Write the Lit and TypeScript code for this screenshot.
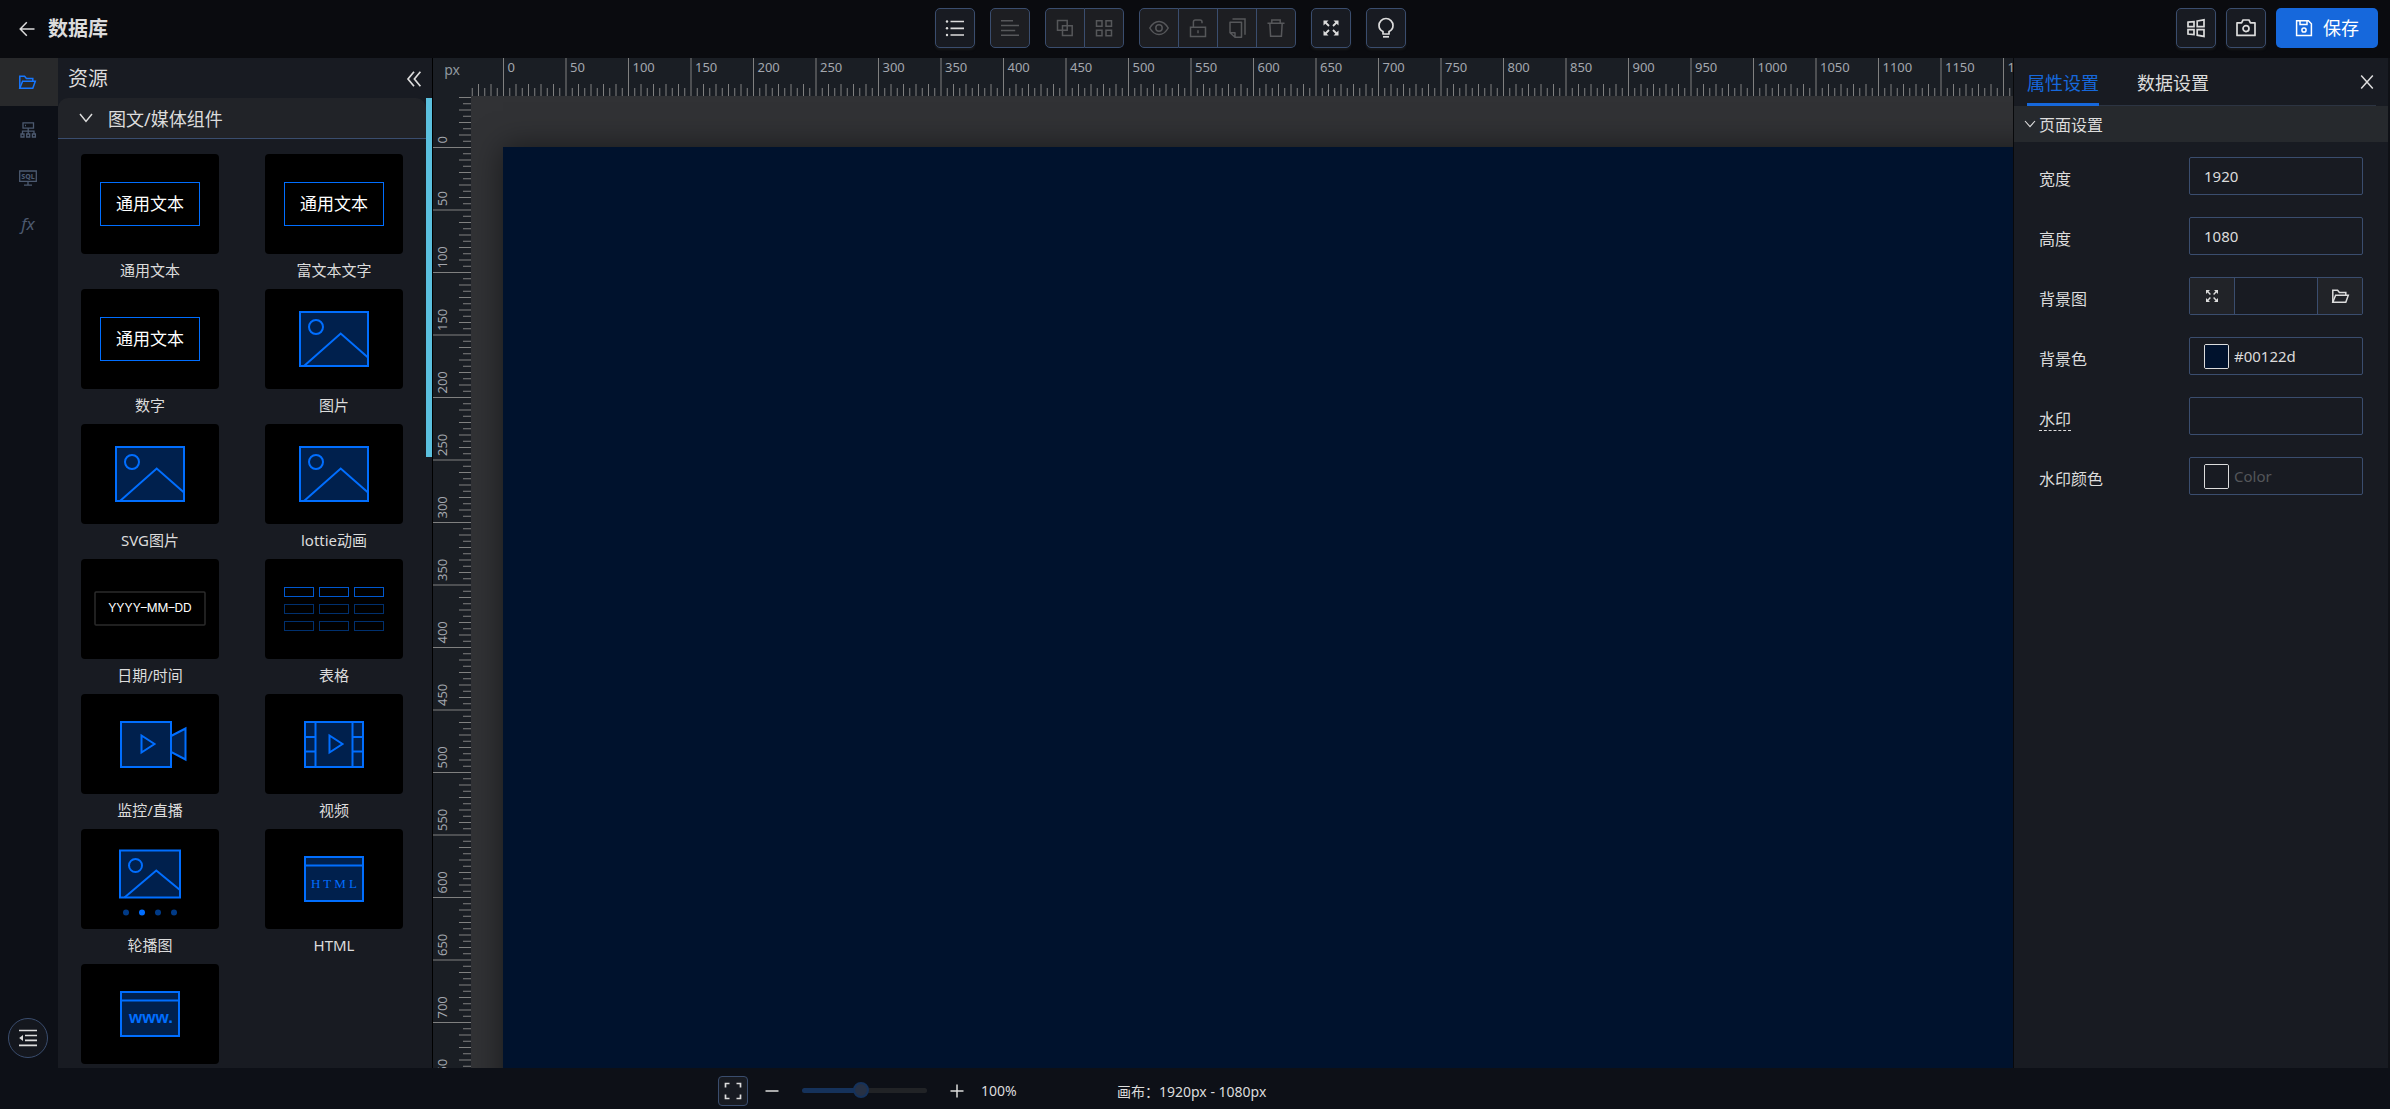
import { LitElement, html, svg, css, nothing } from "lit";
import { customElement, property, state } from "lit/decorators.js";
import { classMap } from "lit/directives/class-map.js";
import { styleMap } from "lit/directives/style-map.js";

const SCALE = 1.25;

/* ---------- icons ---------- */
const icon = (w: number, h: number, body: unknown, sw = 1.5) => html`<svg
  width=${w} height=${h} viewBox="0 0 ${w} ${h}" fill="none" stroke="currentColor"
  stroke-width=${sw} aria-hidden="true">${body}</svg>`;

const corners = svg`
  <path d="M4.5 4.5 8 8M15.5 4.5 12 8M4.5 15.5 8 12M15.5 15.5 12 12" stroke-width="1.8"/>
  <path d="M2.5 2.5h5l-5 5zM17.5 2.5h-5l5 5zM2.5 17.5h5l-5-5zM17.5 17.5h-5l5-5z" fill="currentColor" stroke="none"/>`;
const folder = svg`
  <path d="M1.8 14.2V2.2H6.6L8.4 4.4H14.8V7"/>
  <path d="M1.8 14.2 4.6 7.2H17.3L14.8 14.2Z"/>`;

const icons = {
  back: icon(18, 18, svg`<path d="M16.5 9H2.5M8.8 2.2 2.2 9l6.6 6.8"/>`),
  list: icon(20, 20, svg`<path d="M5.5 3.5H19M5.5 10.3H19M5.5 17H19"/>
    <g fill="currentColor" stroke="none"><circle cx="2" cy="3.5" r="1.2"/><circle cx="2" cy="10.3" r="1.2"/><circle cx="2" cy="17" r="1.2"/></g>`, 1.7),
  align: icon(20, 20, svg`<path d="M1 2.8H13M1 7.6H19M1 12.4H15.2M1 17.2H19"/>`),
  group: icon(20, 20, svg`<path d="M2.5 2.5H12.2V12.2H2.5ZM7.5 7.8H17.2V17.5H7.5Z"/>`),
  grid: icon(20, 20, svg`<path d="M2.5 2.8H8V8.3H2.5ZM12 2.8H17.5V8.3H12ZM2.5 12.2H8V17.7H2.5ZM12 12.2H17.5V17.7H12Z"/>`),
  eye: icon(20, 20, svg`<path d="M0.8 10Q4.5 3.4 10 3.4T19.2 10Q15.5 16.6 10 16.6T0.8 10Z"/><circle cx="10" cy="10" r="3.2"/>`),
  unlock: icon(20, 20, svg`<path d="M2.5 9.2H17.5V18.4H2.5Z"/><path d="M5.4 9V4Q5.4 2 7.4 2H12Q14 2 14 4V5.2M10 12.2v3"/>`),
  copy: icon(20, 20, svg`<path d="M5.5 1H18V16.8"/><path d="M3 4.2H14.5V19.2H8L3 14.8ZM3 14.8H8V19.2" stroke-linejoin="round"/>`),
  trash: icon(20, 20, svg`<path d="M1.5 5.2H18.5M5.8 5V2H14.2V5M3.8 5.2 4.6 18.2H15.4L16.2 5.2"/>`),
  expand: icon(20, 20, corners),
  bulb: icon(20, 20, svg`<path d="M7 16V13.6Q3 11.4 3 7.4A7 6.9 0 0 1 17 7.4Q17 11.4 13 13.6V16Z" stroke-linejoin="round"/><path d="M7 18.8H13"/>`, 1.7),
  panes: icon(20, 20, svg`<path d="M2 4.2 8 3.6V8.6H2ZM11.2 3 18 1.8V8.6H11.2ZM2 11.6H8V16.6L2 16ZM11.2 11.6H18V18.4L11.2 17.2Z"/>`, 1.7),
  camera: icon(20, 20, svg`<path d="M1 4.8H5.6L7 2H13L14.4 4.8H19V17.4H1Z" stroke-linejoin="round"/><circle cx="10" cy="10.6" r="3"/>`, 1.7),
  save: icon(18, 18, svg`<path d="M1.6 1.8H13.4L16.4 4.8V16.4H1.6Z"/><path d="M5 2V5.6H12V2"/><circle cx="9" cy="11" r="2.1"/>`),
  folder: icon(19, 16, folder),
  server: icon(18, 18, svg`<path d="M4 1.8H14.5V7.2H4ZM9.2 7.2V13M3.5 13V10.2H15V13M6 4.5h1"/><path d="M2 13H5V16H2ZM7.7 13H10.7V16H7.7ZM13.4 13H16.4V16H13.4Z"/>`, 1.3),
  sql: icon(20, 18, svg`<path d="M1.7 2H18.3V12.4H1.7ZM10 12.4V16M6 16.2H14"/>
    <text x="10" y="9.8" text-anchor="middle" class="sql">SQL</text>`, 1.3),
  fx: icon(20, 20, svg`<text x="10" y="14" text-anchor="middle" class="fx">fx</text>`),
  outdent: icon(20, 20, svg`<path d="M1 2.5H19M7 7.5H19M7 12.3H19M1 17.3H19"/><path d="M5 7V13L1.2 10Z" fill="currentColor" stroke="none"/>`, 1.7),
  collapse: icon(18, 18, svg`<path d="M9 1.8 3 9 9 16.2M15.4 1.8 9.4 9 15.4 16.2"/>`, 1.7),
  chevron: icon(14, 10, svg`<path d="M1 1 7 8.4 13 1"/>`),
  chevronSmall: icon(12, 8, svg`<path d="M1 1 6 6.6 11 1"/>`, 1.1),
  close: icon(14, 16, svg`<path d="M1.2 1.4 12.8 14.6M12.8 1.4 1.2 14.6"/>`),
  frame: icon(18, 18, svg`<path d="M1.5 5.5V1.5H5.5M12.5 1.5H16.5V5.5M16.5 12.5V16.5H12.5M5.5 16.5H1.5V12.5"/>`, 1.7),
  minus: icon(14, 14, svg`<path d="M0.5 7H13.5"/>`),
  plus: icon(14, 14, svg`<path d="M0.5 7H13.5M7 0.5V13.5"/>`),
};

/* ---------- component previews, drawn on a 138 x 100 board ---------- */
const play = (x: number) => svg`<path d="M${x} 41.5V58.5L${x + 13} 50Z"/>`;
const picture = svg`<g class="line">
  <rect x="35" y="23" width="68" height="54"/><circle cx="51" cy="38" r="7" fill="none"/>
  <path d="M39 77 75.7 44.5 103 68.5" fill="none"/></g>`;
const textBox = svg`<rect class="thin" x="19.5" y="28.5" width="99" height="43"/>
  <text class="t-text" x="69" y="56" text-anchor="middle">通用文本</text>`;
const cells = [0, 1, 2].flatMap((r) => [0, 1, 2].map((c) =>
  svg`<rect class=${r ? "cell dim" : "cell"} x=${19.5 + c * 35} y=${28.5 + r * 17} width="29" height="9"/>`));

const previews: Record<string, unknown> = {
  text: textBox,
  picture,
  date: svg`<rect class="date-box" x="14" y="33" width="110" height="33" rx="1"/>
    <text class="t-date" x="69" y="53" text-anchor="middle">YYYY–MM–DD</text>`,
  table: cells,
  live: svg`<g class="line"><path d="M90 42 104.5 34.5V65.5L90 58Z"/><rect x="40" y="28" width="50" height="45"/>${play(60.5)}</g>`,
  video: svg`<g class="line"><rect x="40" y="28" width="58" height="45"/>
    <path d="M50.5 28V73M87.5 28V73M40 43H50.5M40 57.5H50.5M87.5 43H98M87.5 57.5H98"/>${play(64.5)}</g>`,
  carousel: svg`<g class="line"><rect x="39" y="21.5" width="60" height="47"/><circle cx="54.5" cy="36.5" r="6.5" fill="none"/>
    <path d="M43.5 68.5 75.3 41.5 99 61" fill="none"/></g>
    ${[45, 61, 77, 93].map((x, i) => svg`<circle class=${i === 1 ? "dot on" : "dot"} cx=${x} cy="83.5" r="3"/>`)}`,
  html: svg`<g class="line"><rect x="40" y="28" width="58" height="44"/><path d="M40 36.5H98"/></g>
    <text class="t-html" x="69" y="59" text-anchor="middle">H T M L</text>`,
  www: svg`<g class="line"><rect x="40" y="28" width="58" height="44"/><path d="M40 36.5H98"/></g>
    <text class="t-www" x="70" y="59" text-anchor="middle">www.</text>`,
};

@customElement("component-card")
class ComponentCard extends LitElement {
  @property() label = "";
  @property() preview = "";

  static styles = css`
    :host { display: flex; flex-direction: column; align-items: center; gap: 6px; }
    .board { display: block; width: 138px; height: 100px; background: #000; border-radius: 4px; }
    .label { font-size: 15px; line-height: 20px; white-space: nowrap; }
    .line { stroke: #006eff; stroke-width: 2; fill: #00204d; }
    .thin { stroke: #006eff; fill: none; }
    .cell { stroke: #0058d0; fill: none; }
    .cell.dim { stroke: #00306e; }
    .date-box { stroke: #2b2b2b; stroke-width: 1.5; fill: none; }
    .dot { fill: #003a86; }
    .dot.on { fill: #006eff; }
    .t-text { fill: #fff; font-size: 17px; }
    .t-date { fill: #fff; font: 400 12px Inter, sans-serif; }
    .t-html { fill: #006eff; font: 13px "Liberation Serif", serif; }
    .t-www { fill: #006eff; font: bold 17px "Liberation Sans", sans-serif; }
  `;

  render() {
    return html`<svg class="board" viewBox="0 0 138 100" aria-hidden="true">${previews[this.preview] ?? nothing}</svg>
      <span class="label">${this.label}</span>`;
  }
}

@customElement("ruler-strip")
class RulerStrip extends LitElement {
  @property({ type: Boolean }) vertical = false;
  @property({ type: Number }) origin = 0;
  @state() private span = 0;

  private observer = new ResizeObserver(() => {
    this.span = this.vertical ? this.clientHeight : this.clientWidth;
  });

  static styles = css`
    :host { display: block; overflow: hidden; background: #1a1e24; min-width: 0; min-height: 0; contain: strict; }
    svg { display: block; }
    .tick { stroke: #808080; stroke-width: 1; }
    .num { fill: #a3a7ae; font: 13px "Noto Sans", sans-serif; }
  `;

  connectedCallback() {
    super.connectedCallback();
    this.observer.observe(this);
  }

  disconnectedCallback() {
    this.observer.disconnect();
    super.disconnectedCallback();
  }

  render() {
    const marks = [];
    const last = (this.span - this.origin) / SCALE;
    /* a vertical number reads upward from its mark, so one mark past the end still shows */
    const end = this.vertical ? last + 20 : last;
    for (let v = -Math.floor(this.origin / SCALE / 5) * 5; v <= end; v += 5) {
      const p = this.origin + v * SCALE + 0.5;
      const major = v % 50 === 0;
      const size = major ? 38 : v % 10 === 0 ? 12 : 8;
      marks.push(this.vertical
        ? svg`<path class="tick" d="M38 ${p}H${38 - size}"/>`
        : svg`<path class="tick" d="M${p} 38V${38 - size}"/>`);
      if (major) {
        marks.push(this.vertical
          ? svg`<text class="num" transform="translate(14 ${p - 4}) rotate(-90)">${v}</text>`
          : svg`<text class="num" x=${p + 4} y="14">${v}</text>`);
      }
    }
    return html`<svg width=${this.vertical ? 38 : this.span} height=${this.vertical ? this.span : 38} aria-hidden="true">${marks}</svg>`;
  }
}

@customElement("app-root")
class AppRoot extends LitElement {
  @state() private nav = 0;
  @state() private tab = 0;
  @state() private zoom = 47;

  private cards = [
    ["通用文本", "text"], ["富文本文字", "text"], ["数字", "text"], ["图片", "picture"],
    ["SVG图片", "picture"], ["lottie动画", "picture"], ["日期/时间", "date"], ["表格", "table"],
    ["监控/直播", "live"], ["视频", "video"], ["轮播图", "carousel"], ["HTML", "html"], ["", "www"],
  ];

  static styles = css`
    :host {
      --edge: #3a4d6e;
      display: grid; grid-template: 58px minmax(0, 1fr) 41px / minmax(0, 1fr);
      height: 100vh; overflow: hidden; background: #0d1017; color: #dcdcdc;
      font-family: "Noto Sans", "Noto Sans CJK SC", sans-serif; font-size: 16px;
    }
    * { box-sizing: border-box; }
    svg { display: block; flex: none; overflow: visible; }
    button, input { font: inherit; color: inherit; margin: 0; }
    button {
      display: inline-flex; align-items: center; justify-content: center;
      padding: 0; border: 0; background: none; cursor: pointer;
    }

    .header { display: flex; align-items: center; background: #0a0b0f; padding: 0 12px 2px 0; }
    .brand { flex: 1 1 0; display: flex; align-items: center; gap: 12px; padding: 2px 0 0 18px; }
    .brand h1 { margin: 0; font-size: 20px; line-height: 28px; font-weight: 700; }
    .tools { display: flex; gap: 15px; }
    .actions { flex: 1 1 0; display: flex; justify-content: flex-end; gap: 10px; padding-left: 56px; }
    .tool { width: 40px; height: 40px; border: 1px solid var(--edge); border-radius: 5px; background: #181b22; box-shadow: 0 2px 2px #17181a; }
    .tool[disabled] { background: #1d1e22; color: #56575a; box-shadow: none; cursor: default; }
    .set { display: flex; }
    .set .tool + .tool { border-left: 0; width: 39px; }
    .set .tool:not(:first-child) { border-top-left-radius: 0; border-bottom-left-radius: 0; }
    .set .tool:not(:last-child) { border-top-right-radius: 0; border-bottom-right-radius: 0; }
    .save { width: 102px; height: 40px; gap: 10px; border-radius: 5px; background: #1668dc; color: #fff; font-size: 18px; line-height: 24px; }

    .body { display: grid; grid-template-columns: 58px 375px minmax(0, 1fr) 377px; min-height: 0; }
    .nav { display: flex; flex-direction: column; align-items: stretch; color: #4c5a70; }
    .nav-item { height: 48px; padding-right: 3px; }
    .nav-item.active { background: #28292b; color: #1677ff; }
    .sql { font: 800 7px "Noto Sans", sans-serif; fill: currentColor; stroke: none; }
    .fx { font: italic 17px "Noto Sans", sans-serif; fill: currentColor; stroke: none; }
    .round { align-self: center; width: 40px; height: 40px; margin: auto 2px 10px 0; border: 1px solid var(--edge); border-radius: 50%; background: #14171e; color: #dcdcdc; }

    .assets { display: flex; flex-direction: column; min-height: 0; background: #181b22; border-right: 1px solid #000; }
    .assets-head { display: flex; align-items: center; justify-content: space-between; height: 40px; padding: 2px 9px 0 10px; flex: none; }
    .assets-head h2 { margin: 0; font-size: 20px; line-height: 28px; font-weight: 400; }
    .assets-body { flex: 1; display: flex; min-height: 0; }
    .scroller { flex: 1; min-width: 0; overflow: hidden auto; scrollbar-width: none; }
    .track { width: 6px; flex: none; }
    .thumb { background: #5bc0de; }
    .fold { display: flex; width: 100%; height: 41px; justify-content: flex-start; gap: 15px; padding-left: 21px; border-bottom: 1px solid var(--edge); border-radius: 10px 10px 0 0; background: #212328; font-size: 18px; }
    .cards { display: grid; grid-template-columns: 1fr 1fr; row-gap: 9px; padding-top: 15px; }

    .stage { display: grid; grid-template: 38px minmax(0, 1fr) / 38px minmax(0, 1fr); min-height: 0; overflow: hidden; }
    .unit { display: flex; align-items: center; justify-content: center; background: #1a1e24; color: #8f979e; font-size: 14px; line-height: 18px; padding-bottom: 14px; }
    .desk { overflow: hidden; background: #313235; padding: 51px 0 0 32px; }
    .desk { padding-top: 51px; }
    .canvas { background: #00122d; box-shadow: 0 0 30px rgba(0, 0, 0, 0.5); }

    .props { background: #181b22; border-left: 1px solid #08090b; border-right: 2px solid #0f1116; }
    .tabs { display: flex; align-items: stretch; gap: 38px; height: 48px; margin: 0 12px 0 13px; border-bottom: 1px solid #2c3442; }
    .tab { font-size: 18px; margin-bottom: -1px; border-bottom: 3px solid transparent; border-top: 3px solid transparent; }
    .tab.active { color: #1668dc; border-bottom-color: #1668dc; }
    .close { margin-left: auto; padding: 1px 2px 0 4px; }
    .section { display: flex; width: 100%; height: 36px; justify-content: flex-start; gap: 3px; padding-left: 10px; background: #26292d; }
    .form { display: flex; flex-direction: column; gap: 22px; padding: 15px 25px; }
    .row { display: flex; align-items: center; justify-content: space-between; height: 38px; }
    .row label { line-height: 22px; padding-top: 5px; }
    .hint { border-bottom: 1px dashed #dcdcdc; }
    .field { display: flex; align-items: stretch; width: 174px; height: 38px; border: 1px solid var(--edge); border-radius: 2px; overflow: hidden; }
    .field input[type="text"] { flex: 1; min-width: 0; border: 0; outline: 0; padding: 0 14px; background: none; font-size: 15px; }
    .field.color { align-items: center; padding-left: 14px; }
    .field.color input[type="text"] { padding: 0 5px; }
    .field input::placeholder { color: #54565a; }
    .field button { width: 45px; background: #212328; }
    .field button:first-child { border-right: 1px solid var(--edge); }
    .field button:last-child { border-left: 1px solid var(--edge); }
    .swatch { appearance: none; width: 25px; height: 25px; padding: 0; border: 1px solid #dcdcdc; border-radius: 2px; background: none; overflow: hidden; }
    .swatch::-webkit-color-swatch-wrapper { padding: 0; }
    .swatch::-webkit-color-swatch { border: 0; border-radius: 0; }

    .footer { display: flex; align-items: center; padding: 4px 0 0 30%; font-size: 14px; }
    .fit { width: 30px; height: 30px; margin-left: 1px; border: 1px solid var(--edge); border-radius: 4px; background: #181b22; }
    .step { width: 48px; height: 30px; }
    .step.less { margin-right: 6px; }
    .step.more { margin-left: 6px; }
    .range { appearance: none; width: 125px; height: 16px; background: none; outline: 0; }
    .range::-webkit-slider-runnable-track { height: 5px; border-radius: 3px; background: linear-gradient(to right, #15325b var(--fill), #212326 var(--fill)); }
    .range::-webkit-slider-thumb { appearance: none; width: 16px; height: 16px; margin-top: -6px; border: 2px solid #15325b; border-radius: 50%; background: #263145; }
    .percent { width: 136px; }
  `;

  private field(label: string, id: string, control: unknown, hint = false) {
    return html`<div class="row"><label for=${id}><span class=${hint ? "hint" : ""}>${label}</span></label>${control}</div>`;
  }

  private tool(name: keyof typeof icons, label: string, disabled = false) {
    return html`<button class="tool" aria-label=${label} ?disabled=${disabled}>${icons[name]}</button>`;
  }

  render() {
    return html`
      <header class="header">
        <div class="brand">
          <button aria-label="返回">${icons.back}</button>
          <h1>数据库</h1>
        </div>
        <div class="tools">
          ${this.tool("list", "图层")}
          ${this.tool("align", "对齐", true)}
          <div class="set">${this.tool("group", "组合", true)}${this.tool("grid", "拆分", true)}</div>
          <div class="set">
            ${this.tool("eye", "显示", true)}${this.tool("unlock", "锁定", true)}${this.tool("copy", "复制", true)}${this.tool("trash", "删除", true)}
          </div>
          ${this.tool("expand", "全屏")}
          ${this.tool("bulb", "提示")}
        </div>
        <div class="actions">
          ${this.tool("panes", "布局")}
          ${this.tool("camera", "截图")}
          <button class="save">${icons.save}<span>保存</span></button>
        </div>
      </header>

      <main class="body">
        <nav class="nav">
          ${([["folder", "资源"], ["server", "数据源"], ["sql", "查询"], ["fx", "函数"]] as const).map(([name, label], i) => html`
            <button class=${classMap({ "nav-item": true, active: i === this.nav })} aria-label=${label}
              @click=${() => (this.nav = i)}>${icons[name]}</button>`)}
          <button class="round" aria-label="展开菜单">${icons.outdent}</button>
        </nav>

        <aside class="assets">
          <div class="assets-head"><h2>资源</h2><button aria-label="收起">${icons.collapse}</button></div>
          <div class="assets-body">
            <div class="scroller">
              <button class="fold" aria-expanded="true">${icons.chevron}<span>图文/媒体组件</span></button>
              <div class="cards">
                ${this.cards.map(([label, preview]) => html`<component-card label=${label} preview=${preview}></component-card>`)}
              </div>
            </div>
            <div class="track"><div class="thumb" style=${styleMap({ height: "37%" })}></div></div>
          </div>
        </aside>

        <section class="stage">
          <div class="unit">px</div>
          <ruler-strip .origin=${32}></ruler-strip>
          <ruler-strip .vertical=${true} .origin=${51}></ruler-strip>
          <div class="desk">
            <div class="canvas" style=${styleMap({ width: `${1920 * SCALE}px`, height: `${1080 * SCALE}px` })}></div>
          </div>
        </section>

        <aside class="props">
          <div class="tabs">
            ${["属性设置", "数据设置"].map((label, i) => html`
              <button class=${classMap({ tab: true, active: i === this.tab })} @click=${() => (this.tab = i)}>${label}</button>`)}
            <button class="close" aria-label="关闭">${icons.close}</button>
          </div>
          <button class="section" aria-expanded="true">${icons.chevronSmall}<span>页面设置</span></button>
          <div class="form">
            ${this.field("宽度", "w", html`<div class="field"><input id="w" type="text" value="1920" /></div>`)}
            ${this.field("高度", "h", html`<div class="field"><input id="h" type="text" value="1080" /></div>`)}
            ${this.field("背景图", "bg", html`<div class="field">
              <button aria-label="适应">${icon(16, 16, svg`<g transform="scale(0.8)">${corners}</g>`)}</button>
              <input id="bg" type="text" />
              <button aria-label="选择图片">${icons.folder}</button></div>`)}
            ${this.field("背景色", "bc", html`<div class="field color">
              <input class="swatch" type="color" value="#00122d" aria-label="背景色" />
              <input id="bc" type="text" value="#00122d" /></div>`)}
            ${this.field("水印", "wm", html`<div class="field"><input id="wm" type="text" /></div>`, true)}
            ${this.field("水印颜色", "wc", html`<div class="field color">
              <input class="swatch" type="color" value="#181b22" aria-label="水印颜色" />
              <input id="wc" type="text" placeholder="Color" /></div>`)}
          </div>
        </aside>
      </main>

      <footer class="footer">
        <button class="fit" aria-label="适应画布">${icons.frame}</button>
        <button class="step less" aria-label="缩小">${icons.minus}</button>
        <input class="range" type="range" min="0" max="100" aria-label="缩放" .value=${String(this.zoom)}
          style=${styleMap({ "--fill": `${this.zoom}%` })}
          @input=${(e: Event) => (this.zoom = Number((e.target as HTMLInputElement).value))} />
        <button class="step more" aria-label="放大">${icons.plus}</button>
        <span class="percent">100%</span>
        <span>画布：1920px - 1080px</span>
      </footer>
    `;
  }
}
